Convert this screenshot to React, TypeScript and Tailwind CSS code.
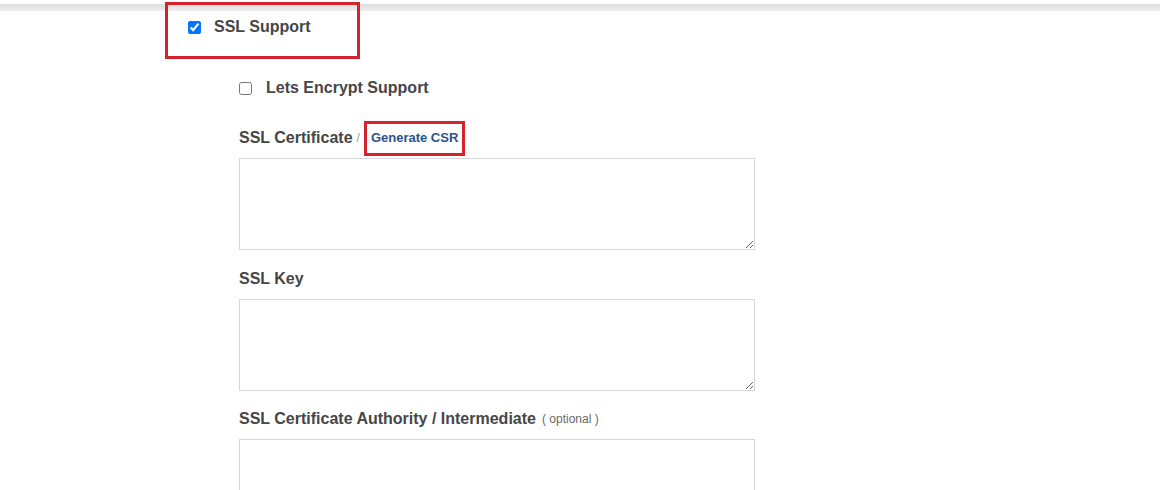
import React from "react";

export default function App() {
  return (
    <div
      className="relative w-full h-[490px] bg-white overflow-hidden text-[#464646]"
      style={{ fontFamily: '"Liberation Sans", Arial, sans-serif' }}
    >
      <div className="absolute top-[4px] left-0 right-0 h-[7px] bg-gradient-to-b from-[#dedede] to-[#efefef]" />

      <div className="relative z-10 ml-[165px] mt-[2px] w-[195px] h-[57px] border-[3px] border-[#d6222c] flex items-start pl-[20px] pt-[13px]">
        <label className="flex items-center gap-[13px]">
          <input type="checkbox" defaultChecked className="w-[13px] h-[13px] m-0" />
          <span className="text-[16px] font-bold leading-[18px]">SSL Support</span>
        </label>
      </div>

      <div className="ml-[239px] w-[516px]">
        <label className="mt-[20px] flex items-center gap-[14px] h-[18px]">
          <input type="checkbox" className="w-[13px] h-[13px] m-0" />
          <span className="text-[16px] font-bold leading-[18px]">Lets Encrypt Support</span>
        </label>

        <div className="mt-[32px] h-[18px] flex items-center">
          <span className="text-[16px] font-bold leading-[18px]">SSL Certificate</span>
          <span className="ml-[4px] text-[12px] text-[#9a9a9a]">/</span>
          <span className="ml-[4px] h-[35px] px-[4px] border-[3px] border-[#d6222c] flex items-center text-[13px] font-bold text-[#2c5388]">
            Generate CSR
          </span>
        </div>
        <textarea className="mt-[11px] block w-[516px] h-[92px] border border-[#d6d6d6] bg-white outline-none" />

        <div className="mt-[20px] h-[18px] flex items-center">
          <span className="text-[16px] font-bold leading-[18px]">SSL Key</span>
        </div>
        <textarea className="mt-[11px] block w-[516px] h-[92px] border border-[#d6d6d6] bg-white outline-none" />

        <div className="mt-[19px] h-[18px] flex items-center">
          <span className="text-[16px] font-bold leading-[18px]">SSL Certificate Authority / Intermediate</span>
          <span className="ml-[6px] text-[12px] text-[#6a6a6a]">( optional )</span>
        </div>
        <textarea className="mt-[11px] block w-[516px] h-[92px] border border-[#d6d6d6] bg-white outline-none" />
      </div>
    </div>
  );
}
